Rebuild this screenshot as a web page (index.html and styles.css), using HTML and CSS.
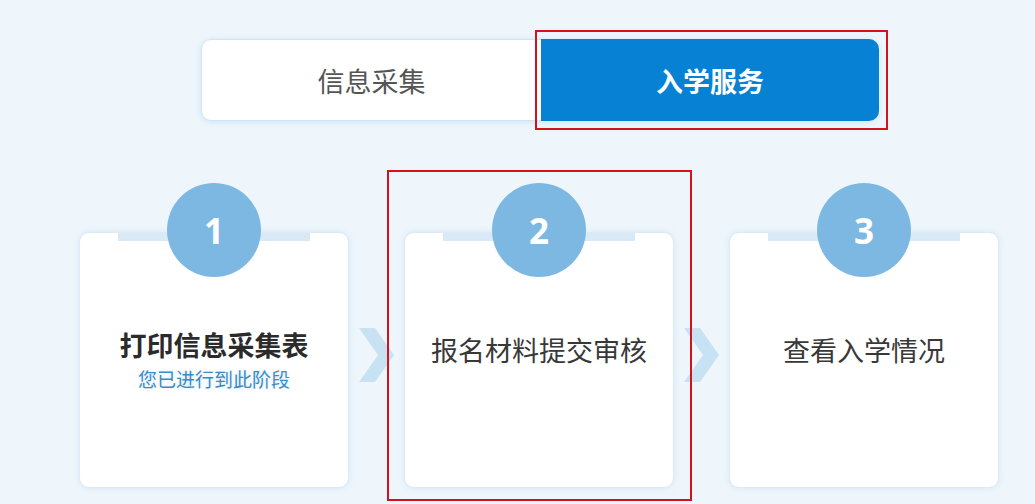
FILE: index.html
```html
<!DOCTYPE html>
<html lang="zh-CN">
<head>
<meta charset="utf-8">
<title>入学服务</title>
<link rel="stylesheet" href="styles.css">
</head>
<body>
<div class="page">
  <div class="tabs">
    <div class="tab">信息采集</div>
    <div class="tab active">入学服务<span class="mark mark-tab"></span></div>
  </div>
  <div class="steps">
    <div class="card">
      <span class="strip"></span>
      <span class="num">1</span>
      <div class="body body-first">
        <div class="title strong">打印信息采集表</div>
        <div class="sub">您已进行到此阶段</div>
      </div>
    </div>
    <svg class="chev" width="35" height="54" viewBox="0 0 35 54"><polygon points="0,0 16,0 35,27 16,54 0,54 19,27"/></svg>
    <div class="card">
      <span class="strip"></span>
      <span class="num">2</span>
      <div class="body">
        <div class="title">报名材料提交审核</div>
      </div>
      <span class="mark mark-card"></span>
    </div>
    <svg class="chev" width="35" height="54" viewBox="0 0 35 54"><polygon points="0,0 16,0 35,27 16,54 0,54 19,27"/></svg>
    <div class="card">
      <span class="strip"></span>
      <span class="num">3</span>
      <div class="body">
        <div class="title">查看入学情况</div>
      </div>
    </div>
  </div>
</div>
</body>
</html>
```
FILE: styles.css
```css
html, body {
  margin: 0;
  padding: 0;
}
body {
  background: #eef6fc;
  font-family: "Noto Sans CJK SC", "Noto Sans", sans-serif;
  width: 1035px;
  height: 504px;
  overflow: hidden;
}
.page {
  padding-top: 39px;
}
.tabs {
  display: flex;
  margin-left: 201px;
  width: 678px;
  height: 82px;
  box-sizing: border-box;
  background: #fff;
  border: 1px solid #d3e5f2;
  border-radius: 10px;
  box-shadow: 0 1px 6px rgba(150, 195, 230, 0.35);
}
.tab {
  position: relative;
  flex: 0 0 339px;
  display: flex;
  align-items: center;
  justify-content: center;
  font-size: 27px;
  color: #555;
}
.tab.active {
  flex: 1 1 auto;
  margin: -1px -1px -1px 0;
  background: #0681d3;
  color: #fff;
  font-weight: 700;
  border-radius: 0 10px 10px 0;
}
.mark {
  position: absolute;
  border: 2px solid #d3121c;
  pointer-events: none;
}
.mark-tab {
  left: -6px;
  right: -9px;
  top: -9px;
  bottom: -9px;
}
.steps {
  display: flex;
  align-items: flex-start;
  margin-top: 111px;
  padding-left: 79px;
  gap: 10px;
}
.card {
  position: relative;
  width: 270px;
  height: 256px;
  box-sizing: border-box;
  background: #fff;
  border: 1px solid #dcebf5;
  border-radius: 10px;
  box-shadow: 0 0 6px rgba(160, 200, 230, 0.3);
}
.strip {
  position: absolute;
  top: 0;
  left: 38px;
  right: 38px;
  height: 8px;
  background: #d9eaf6;
}
.num {
  position: absolute;
  top: -50px;
  left: 50%;
  width: 94px;
  height: 94px;
  margin-left: -47px;
  border-radius: 50%;
  background: #7db8e3;
  color: #fff;
  font-family: "Open Sans", "Noto Sans", sans-serif;
  font-weight: 700;
  font-size: 35px;
  display: flex;
  align-items: center;
  justify-content: center;
}
.body {
  display: flex;
  flex-direction: column;
  align-items: center;
  padding-top: 99px;
}
.body-first {
  padding-top: 94px;
}
.title {
  font-size: 27px;
  line-height: 36px;
  color: #383838;
}
.title.strong {
  font-weight: 700;
  color: #2b2b2b;
}
.sub {
  margin-top: 3px;
  font-size: 19px;
  line-height: 26px;
  color: #3a8cc6;
  text-shadow: 0 0 4px #cfe7f7;
}
.chev {
  flex: none;
  margin-top: 96px;
  fill: #c7e2f3;
}
.mark-card {
  left: -18px;
  right: -19px;
  top: -63px;
  bottom: -14px;
}
```
